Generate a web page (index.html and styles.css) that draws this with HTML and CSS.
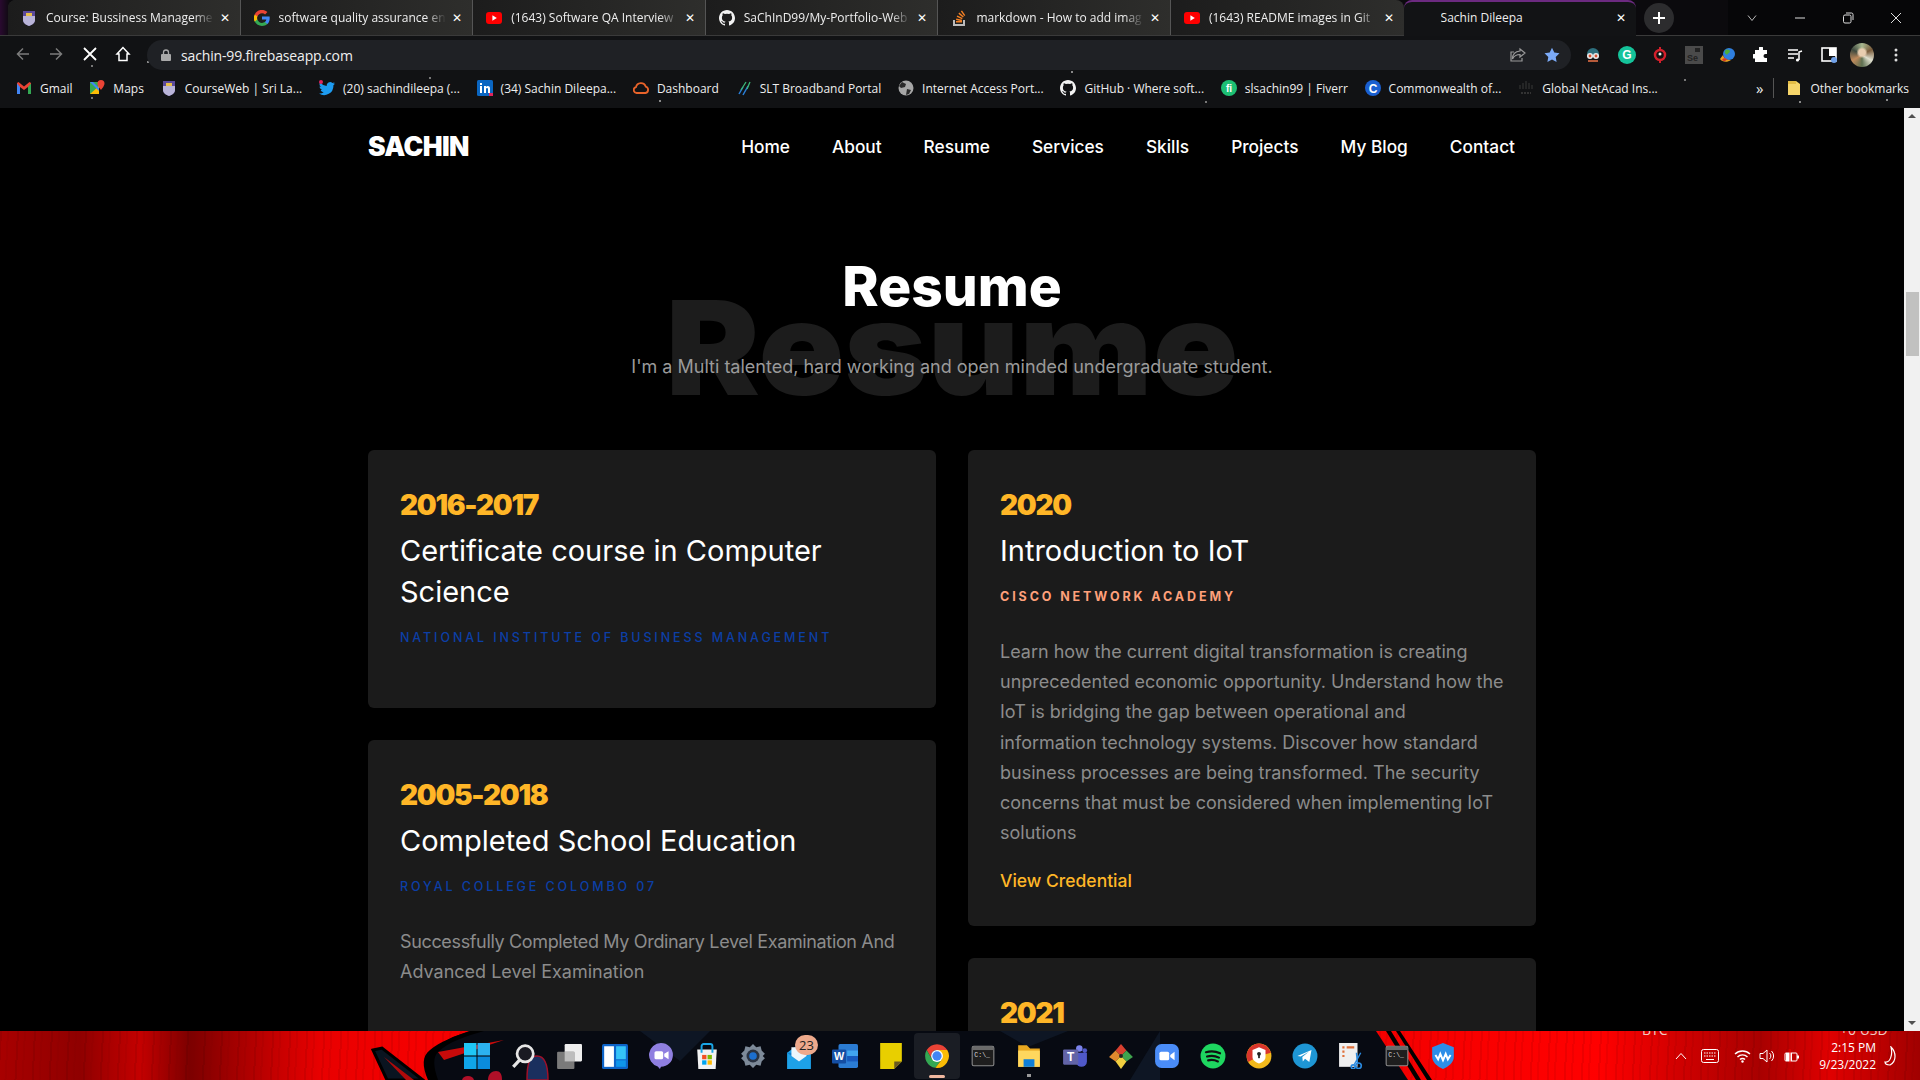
FILE: index.html
```html
<!DOCTYPE html>
<html lang="en">
<head>
  <meta charset="UTF-8" />
  <meta name="viewport" content="width=device-width, initial-scale=1.0" />
  <title>Sachin Dileepa</title>
  <link rel="stylesheet" href="styles.css">
</head>
<body>
  <svg class="sprite" xmlns="http://www.w3.org/2000/svg">
    <symbol id="i-shield" viewBox="0 0 16 16"><path d="M2 1h12v9c0 3-3 5-6 6-3-1-6-3-6-6z" fill="#5b4a9a"/><path d="M2 6h12v4c0 3-3 5-6 6-3-1-6-3-6-6z" fill="#b9b4d8"/><rect x="5" y="3" width="6" height="3" fill="#e7c04a"/></symbol>
    <symbol id="i-yt" viewBox="0 0 16 16"><rect y="2" width="16" height="12" rx="3" fill="#f00"/><path d="M6.4 5.2l4.4 2.8-4.4 2.8z" fill="#fff"/></symbol>
    <symbol id="i-gh" viewBox="0 0 16 16"><path fill="#f2f2f2" d="M8 0C3.6 0 0 3.6 0 8c0 3.5 2.3 6.5 5.5 7.6.4.1.5-.2.5-.4v-1.4c-2.2.5-2.7-1.1-2.7-1.1-.4-.9-.9-1.2-.9-1.2-.7-.5.1-.5.1-.5.8.1 1.2.8 1.2.8.7 1.2 1.9.9 2.3.7.1-.5.3-.9.5-1.1-1.8-.2-3.6-.9-3.6-4 0-.9.3-1.6.8-2.1-.1-.2-.4-1 .1-2.1 0 0 .7-.2 2.2.8a7.600 7.600 0 0 1 4 0c1.5-1 2.2-.8 2.2-.8.4 1.1.2 1.900.1 2.100.5.6.8 1.300.8 2.100 0 3.100-1.900 3.700-3.700 3.900.3.300.6.800.6 1.500v2.200c0 .2.100.5.600.4C13.700 14.500 16 11.500 16 8c0-4.400-3.600-8-8-8z"/></symbol>
    <symbol id="i-chrome" viewBox="0 0 24 24"><path d="M2.500 6.500A11 11 0 0 1 21.500 6.500H12A5.500 5.500 0 0 0 7.200 14.800z" fill="#ea4335"/><path d="M2.500 6.500A11 11 0 0 0 10.500 22.900L16.800 14.800H7.200z" fill="#34a853"/><path d="M21.500 6.500H12L16.800 14.800 10.500 22.900A11 11 0 0 0 21.500 6.500z" fill="#fbbc05"/><circle cx="12" cy="12" r="5.500" fill="#fff"/><circle cx="12" cy="12" r="4.300" fill="#4285f4"/></symbol>
    <symbol id="i-term" viewBox="0 0 24 24"><rect x="2" y="3" width="20" height="18" rx="1.500" fill="#1e1e1e" stroke="#8b8b8b"/><rect x="2.500" y="3.500" width="19" height="3" fill="#6a6a6a"/><text x="4" y="13" font-size="6" fill="#ddd" font-family="Liberation Mono, monospace">C:\_</text></symbol>
  </svg>

  <header class="browser">
    <div class="tabstrip">
      <div class="tab">
        <svg class="favicon"><use href="#i-shield"/></svg>
        <span class="tab-title">Course: Bussiness Manageme</span><span class="tab-x">✕</span>
      </div>
      <div class="tab">
        <svg class="favicon" viewBox="0 0 16 16"><path d="M15.700 8.200c0-.6 0-1.100-.1-1.600H8v3h4.400c-.2 1-.8 1.900-1.600 2.500v2h2.600c1.500-1.400 2.300-3.400 2.300-5.900z" fill="#4285f4"/><path d="M8 16c2.200 0 4-.7 5.400-1.900l-2.600-2c-.7.5-1.700.8-2.800.8-2.100 0-3.900-1.400-4.600-3.400H.7v2.100C2 14.200 4.800 16 8 16z" fill="#34a853"/><path d="M3.400 9.500c-.4-1-.4-2 0-3V4.400H.7a8 8 0 0 0 0 7.200z" fill="#fbbc05"/><path d="M8 3.200c1.200 0 2.300.4 3.100 1.200l2.300-2.300A8 8 0 0 0 .7 4.400l2.700 2.100C4.100 4.600 5.900 3.200 8 3.200z" fill="#ea4335"/></svg>
        <span class="tab-title">software quality assurance en</span><span class="tab-x">✕</span>
      </div>
      <div class="tab">
        <svg class="favicon"><use href="#i-yt"/></svg>
        <span class="tab-title">(1643) Software QA Interview</span><span class="tab-x">✕</span>
      </div>
      <div class="tab">
        <svg class="favicon"><use href="#i-gh"/></svg>
        <span class="tab-title">SaChInD99/My-Portfolio-Web</span><span class="tab-x">✕</span>
      </div>
      <div class="tab">
        <svg class="favicon" viewBox="0 0 16 16"><path d="M2 10h2v4h8v-4h2v6H2z" fill="#bcbbbb"/><path d="M5 11h6v1.500H5zM5.300 8.600l5.800 1.200-.3 1.400L5 10zM6.300 5.500l5.300 2.500-.6 1.300-5.300-2.500zM8.300 2.600l4.500 3.800-.9 1.100-4.500-3.800zM11 .5l3.300 4.800-1.200.8L9.800 1.300z" fill="#f48024"/></svg>
        <span class="tab-title">markdown - How to add imag</span><span class="tab-x">✕</span>
      </div>
      <div class="tab">
        <svg class="favicon"><use href="#i-yt"/></svg>
        <span class="tab-title">(1643) README images in Git</span><span class="tab-x">✕</span>
      </div>
      <div class="tab tab-active">
        <span class="tab-title tab-title-plain">Sachin Dileepa</span><span class="tab-x">✕</span>
      </div>
      <button class="newtab">
        <svg width="14" height="14" viewBox="0 0 14 14"><path d="M7 1v12M1 7h12" stroke="#fff" stroke-width="2"/></svg>
      </button>
      <div class="winctl">
        <svg width="12" height="12" viewBox="0 0 12 12"><path d="M2 3.500l4 5 4-5" fill="none" stroke="#bbb"/></svg>
        <svg width="12" height="12" viewBox="0 0 12 12"><path d="M1 6h10" stroke="#ddd"/></svg>
        <svg width="12" height="12" viewBox="0 0 12 12"><rect x="1.500" y="3" width="7.500" height="8" rx="1.500" fill="none" stroke="#ddd"/><path d="M4 1h5.500A1.500 1.500 0 0 1 11 2.500V8" fill="none" stroke="#ddd"/></svg>
        <svg width="12" height="12" viewBox="0 0 12 12"><path d="M1 1l10 10M11 1L1 11" stroke="#ddd"/></svg>
      </div>
    </div>

    <div class="toolbar">
      <div class="nav-btns">
        <svg width="16" height="16" viewBox="0 0 16 16"><path d="M14 8H2.500M8 2.500L2.500 8 8 13.500" fill="none" stroke="#7c7c7c" stroke-width="1.500"/></svg>
        <svg width="16" height="16" viewBox="0 0 16 16"><path d="M2 8h11.500M8 2.500L13.500 8 8 13.500" fill="none" stroke="#7c7c7c" stroke-width="1.500"/></svg>
        <svg width="16" height="16" viewBox="0 0 16 16"><path d="M2 2l12 12M14 2L2 14" stroke="#fff" stroke-width="1.800"/></svg>
        <svg width="16" height="16" viewBox="0 0 16 16"><path d="M8 1.500L2 8h2v6.500h8V8h2z" fill="none" stroke="#fff" stroke-width="1.500"/></svg>
      </div>
      <div class="omnibox">
        <svg width="10" height="12" viewBox="0 0 10 12"><rect y="5" width="10" height="7" rx="1" fill="#a9a9a9"/><path d="M2.500 5V3.500a2.500 2.500 0 0 1 5 0V5" fill="none" stroke="#a9a9a9" stroke-width="1.300"/></svg>
        <span class="url">sachin-99.firebaseapp.com</span>
        <svg class="omni-share" width="16" height="16" viewBox="0 0 16 16"><path d="M10 2l5 4-5 4V7.500C6 7.500 4 9 2.500 12c0-4 2-7.500 7.500-8zM12 11v3H1V5h3" fill="none" stroke="#9a9a9a" stroke-width="1.200"/></svg>
        <svg width="16" height="16" viewBox="0 0 16 16"><path d="M8 .8l2.300 4.800 5.200.7-3.800 3.600.9 5.200L8 12.600l-4.600 2.500.9-5.200L.5 6.300l5.200-.7z" fill="#7baaf7"/></svg>
      </div>
      <div class="extensions">
        <svg width="18" height="18" viewBox="0 0 18 18"><path d="M3 8a6 6 0 0 1 12 0v3H3z" fill="#2d6f7d"/><circle cx="6" cy="10" r="3" fill="#e8e8e8"/><circle cx="12" cy="10" r="3" fill="#e8e8e8"/><circle cx="6" cy="10" r="1.400" fill="#d8502f"/><circle cx="12" cy="10" r="1.400" fill="#d8502f"/><path d="M4 14h10v2H4z" fill="#b65a3a"/></svg>
        <svg width="18" height="18" viewBox="0 0 18 18"><circle cx="9" cy="9" r="9" fill="#15c39a"/><text x="9" y="13" font-size="12" font-weight="700" text-anchor="middle" fill="#fff" font-family="Liberation Sans, sans-serif">G</text></svg>
        <svg width="18" height="18" viewBox="0 0 18 18"><circle cx="9" cy="9" r="5" fill="#111" stroke="#d21f2b" stroke-width="2.500"/><circle cx="9" cy="8" r="1.500" fill="#eee"/><path d="M9 1v2M9 15v2" stroke="#d21f2b" stroke-width="2"/></svg>
        <svg width="18" height="18" viewBox="0 0 18 18"><rect width="18" height="18" fill="#4a4a4a"/><rect x="10" y="2" width="5" height="4" fill="#222"/><text x="2" y="15" font-size="9" font-weight="700" fill="#222" font-family="Liberation Sans, sans-serif">Se</text></svg>
        <svg width="18" height="18" viewBox="0 0 18 18"><circle cx="10" cy="8" r="6" fill="#2f7fe0"/><path d="M1 13c2 3 7 4 11 1-4 0-7-1-8-5z" fill="#e8a020"/><path d="M6 5c1-2 4-2 5 0 0 2-2 2-3 4-1-1-3-2-2-4z" fill="#4cae3e"/><path d="M3 14c1-2 3-2 5-1-1 2-3 3-5 1z" fill="#d8342a"/></svg>
        <svg width="16" height="16" viewBox="0 0 16 16"><path d="M6 1a2 2 0 0 1 4 0v2h4v4h-1.500a2 2 0 0 0 0 4H14v4H2v-3.500H.8a2.300 2.300 0 0 1 0-4.500H2V3h4z" fill="#fff"/></svg>
        <svg width="16" height="16" viewBox="0 0 16 16"><path d="M1 3h10M1 7h10M1 11h6" stroke="#fff" stroke-width="1.500"/><path d="M12 13V5l3-1" fill="none" stroke="#fff" stroke-width="1.500"/><circle cx="10.500" cy="13" r="1.600" fill="#fff"/></svg>
        <svg width="16" height="16" viewBox="0 0 16 16"><rect x="1" y="1" width="14" height="13" fill="none" stroke="#fff" stroke-width="1.600"/><rect x="8" y="1" width="7" height="8" fill="#fff"/><circle cx="13" cy="13" r="3" fill="#6fa0e8"/></svg>
        <span class="avatar"></span>
        <svg width="4" height="16" viewBox="0 0 4 16"><circle cx="2" cy="3" r="1.500" fill="#ddd"/><circle cx="2" cy="8" r="1.500" fill="#ddd"/><circle cx="2" cy="13" r="1.500" fill="#ddd"/></svg>
      </div>
    </div>

    <nav class="bookmarks">
      <a class="bm"><svg class="favicon" viewBox="0 0 16 16"><path d="M1 3v11h3V7l4 3 4-3v7h3V3l-1.500-1L8 6.500 2.500 2z" fill="#ea4335"/><path d="M1 3.500V14h3V7z" fill="#4285f4"/><path d="M12 7v7h3V3.500z" fill="#34a853"/></svg>Gmail</a>
      <a class="bm"><svg class="favicon" viewBox="0 0 16 16"><path d="M1 2h9v12H1z" fill="#34a853"/><path d="M1 14L10 6v8z" fill="#fbbc05"/><path d="M1 2l9 9V8L4 2z" fill="#4285f4"/><path d="M12 0a3.500 3.500 0 0 0-3.500 3.500C8.500 6 12 10 12 10s3.500-4 3.500-6.500A3.500 3.500 0 0 0 12 0z" fill="#ea4335"/></svg>Maps</a>
      <a class="bm"><svg class="favicon"><use href="#i-shield"/></svg>CourseWeb | Sri La...</a>
      <a class="bm"><svg class="favicon" viewBox="0 0 16 16"><path d="M16 3.500c-.6.300-1.200.5-1.900.5.700-.4 1.200-1 1.400-1.800-.6.400-1.300.7-2.100.8a3.300 3.300 0 0 0-5.600 3A9.300 9.300 0 0 1 1.100 2.600a3.300 3.300 0 0 0 1 4.400c-.5 0-1-.2-1.500-.4 0 1.600 1.100 2.900 2.600 3.200-.5.100-1 .2-1.500.1.400 1.300 1.600 2.200 3 2.300A6.600 6.600 0 0 1 0 13.500 9.300 9.300 0 0 0 14.400 5.200c.6-.4 1.200-1 1.600-1.700z" fill="#1d9bf0"/><circle cx="2" cy="2" r="2" fill="#e0245e"/></svg>(20) sachindileepa (...</a>
      <a class="bm"><svg class="favicon" viewBox="0 0 16 16"><rect width="16" height="16" rx="1.500" fill="#0a66c2"/><path d="M3 6h2v7H3zM3 3h2v2H3zM7 6h2v1c1-1.500 4-1.500 4 1.500V13h-2V9c0-1.500-2-1.500-2 0v4H7z" fill="#fff"/><rect x="12" y="13" width="4" height="3" fill="#e0245e"/></svg>(34) Sachin Dileepa...</a>
      <a class="bm"><svg class="favicon" viewBox="0 0 16 16"><path d="M3.500 13A3 3 0 0 1 3 7.100a5 5 0 0 1 9.700-.5A3.300 3.300 0 0 1 12.500 13z" fill="none" stroke="#e8632a" stroke-width="1.800"/></svg>Dashboard</a>
      <a class="bm"><svg class="favicon" viewBox="0 0 16 16"><path d="M3 14l4-7M7 15l5-9" stroke="#2a7fd8" stroke-width="1.500"/><path d="M5 10l5-8M11 9l3-7" stroke="#3cb878" stroke-width="1.300"/></svg>SLT Broadband Portal</a>
      <a class="bm"><svg class="favicon" viewBox="0 0 16 16"><circle cx="8" cy="8" r="7.500" fill="#a6a6a6"/><path d="M4 2l4 2-1 3-4 1-2-2zM9 9l4 1-2 4-3 1z" fill="#2a2a2a"/></svg>Internet Access Port...</a>
      <a class="bm"><svg class="favicon"><use href="#i-gh"/></svg>GitHub · Where soft...</a>
      <a class="bm"><svg class="favicon" viewBox="0 0 16 16"><circle cx="8" cy="8" r="8" fill="#1dbf73"/><text x="8" y="12" font-size="10" font-weight="700" text-anchor="middle" fill="#fff" font-family="Liberation Sans, sans-serif">fi</text></svg>slsachin99 | Fiverr</a>
      <a class="bm"><svg class="favicon" viewBox="0 0 16 16"><circle cx="8" cy="8" r="8" fill="#1a5fd0"/><text x="8" y="12.500" font-size="12" font-weight="700" text-anchor="middle" fill="#fff" font-family="Liberation Sans, sans-serif">C</text></svg>Commonwealth of...</a>
      <a class="bm"><svg class="favicon" viewBox="0 0 16 16"><path d="M2 5v4M5 3v6M8 1v8M11 3v6M14 5v4" stroke="#333" stroke-width="1.200"/><path d="M3 13h10" stroke="#333" stroke-width="2" stroke-dasharray="2 1"/></svg>Global NetAcad Ins...</a>
      <span class="bm-more">»</span>
      <span class="bm-sep"></span>
      <a class="bm bm-other"><svg class="favicon" viewBox="0 0 16 16"><path d="M2 1h8l4 3v11H2z" fill="#f6d56a"/><path d="M2 1h8v3H2z" fill="#e3bc45"/></svg>Other bookmarks</a>
    </nav>
  </header>

  <div class="viewport">
    <main class="page">
      <div class="topnav">
        <a class="logo">SACHIN</a>
        <ul class="menu">
          <li>Home</li>
          <li>About</li>
          <li>Resume</li>
          <li>Services</li>
          <li>Skills</li>
          <li>Projects</li>
          <li>My Blog</li>
          <li>Contact</li>
        </ul>
      </div>

      <section class="resume">
        <div class="heading">
          <span class="ghost">Resume</span>
          <h1>Resume</h1>
          <p>I'm a Multi talented, hard working and open minded undergraduate student.</p>
        </div>

        <div class="columns">
          <div class="col">
            <article class="card card-first">
              <h3>2016-2017</h3>
              <h4>Certificate course in Computer Science</h4>
              <h5 class="blue">National Institute Of Business Management</h5>
            </article>
            <article class="card card-long">
              <h3>2005-2018</h3>
              <h4>Completed School Education</h4>
              <h5 class="blue">Royal College Colombo 07</h5>
              <p><span class="fit">Successfully Completed My Ordinary Level Examination And</span> Advanced Level Examination</p>
            </article>
          </div>
          <div class="col">
            <article class="card">
              <h3>2020</h3>
              <h4>Introduction to IoT</h4>
              <h5 class="orange">Cisco Network Academy</h5>
              <p>Learn how the current digital transformation is creating unprecedented economic opportunity. Understand how the IoT is bridging the gap between operational and information technology systems. Discover how standard business processes are being transformed. The security concerns that must be considered when implementing IoT solutions</p>
              <a class="credential">View Credential</a>
            </article>
            <article class="card">
              <h3>2021</h3>
            </article>
          </div>
        </div>
      </section>
    </main>
    <div class="scrollbar">
      <span class="arrow arrow-up"></span>
      <span class="thumb"></span>
      <span class="arrow arrow-down"></span>
    </div>
  </div>

  <footer class="taskbar">
    <svg class="wallpaper" viewBox="0 0 1920 49" preserveAspectRatio="none">
      <path d="M470 0H1376L1408 49H436L430 24C440 10 455 5 470 0z" fill="#070a12"/>
      <path d="M373 19l9-2 41 32h-36z" fill="#0a1420" stroke="#000" stroke-width="3"/>
      <path d="M384 26l30 23h-8z" fill="#b00a0a"/>
      <path d="M428 49c-6-14-6-24 2-30 10-8 24-14 40-19h14c-18 5-36 11-46 21-5 5-5 14 0 28z" fill="#000"/>
      <path d="M438 21l66-12-60 20z" fill="#c80a0a"/>
      <path d="M1386 0h5l30 49h-5zM1396 0h4l32 49h-5z" fill="#000"/>
      <path d="M1000 0l28 16 40-16zM640 0l40 30 30-30zM1160 0l-30 49h30z" fill="#0e1624"/>
      <path d="M527 49c0-18 3-24 10-24s11 6 11 24z" fill="#1a2f5e" stroke="#a01028" stroke-width="1.500"/>
      <path d="M488 49c0-6 4-9 8-9s6 3 6 9zM462 49c1-3 3-4 6-4s5 1 6 4z" fill="#b01028"/>
    </svg>
    <span class="widget widget-l">BTC</span>
    <span class="widget widget-r">+0 USD</span>

    <div class="apps">
      <span class="app"><svg viewBox="0 0 24 24"><path d="M0 0h11.500v11.500H0z" fill="#1fc6f5"/><path d="M12.500 0H24v11.500H12.500z" fill="#2cb2f0"/><path d="M0 12.500h11.500V24H0z" fill="#0fa5e9"/><path d="M12.500 12.500H24V24H12.500z" fill="#0a8bdc"/></svg></span>
      <span class="app"><svg viewBox="0 0 24 24"><circle cx="14" cy="10" r="7.500" fill="#1a1a22" stroke="#e6e6e6" stroke-width="2.500"/><path d="M9 15.500L3 22" stroke="#e6e6e6" stroke-width="3"/></svg></span>
      <span class="app"><svg viewBox="0 0 24 24"><rect x="8" y="1" width="16" height="16" rx="1" fill="#eee"/><rect x="1" y="8" width="16" height="16" rx="1" fill="#7a7a7a"/><rect x="8" y="8" width="9" height="9" fill="#bdbdbd"/></svg></span>
      <span class="app"><svg viewBox="0 0 24 24"><rect x="0" y="1" width="24" height="23" rx="1.500" fill="#0d64c8"/><rect x="2" y="3" width="9" height="19" fill="#fff"/><rect x="13" y="3" width="9" height="12" fill="#35c3f8"/><rect x="13" y="16" width="9" height="6" fill="#0f96ea"/></svg></span>
      <span class="app"><svg viewBox="0 0 24 24"><path d="M12 0a11 11 0 0 1 0 22l-1 2-2-2.400A11 11 0 0 1 12 0z" fill="#8f7fe0"/><rect x="6" y="7.500" width="8" height="7.500" rx="1.500" fill="#fff"/><path d="M15 10l4-2.500v7.500l-4-2.500z" fill="#fff"/></svg></span>
      <span class="app"><svg viewBox="0 0 24 24"><path d="M3 6h18l-1 18H4z" fill="#f2f2f2"/><path d="M7 9V3a2 2 0 0 1 2-2h6a2 2 0 0 1 2 2v6" fill="none" stroke="#19a5e6" stroke-width="1.800"/><rect x="7.500" y="11" width="4" height="4" fill="#f25022"/><rect x="12.500" y="11" width="4" height="4" fill="#7fba00"/><rect x="7.500" y="16" width="4" height="4" fill="#00a4ef"/><rect x="12.500" y="16" width="4" height="4" fill="#ffb900"/></svg></span>
      <span class="app"><svg viewBox="0 0 24 24"><path d="M12 1l3 3 4-1 1 4 3 3-2 2 2 2-3 3-1 4-4-1-3 3-3-3-4 1-1-4-3-3 2-2-2-2 3-3 1-4 4 1z" fill="#7d8a99"/><circle cx="12" cy="12" r="6" fill="#2a3342"/><circle cx="12" cy="12" r="3.500" fill="#1c6fd0"/></svg></span>
      <span class="app app-mail"><svg viewBox="0 0 24 24"><path d="M1 9l11-8 11 8v15H1z" fill="#1da1e8"/><path d="M1 9l11 8 11-8" fill="#0f7ccd"/><path d="M5 4h14v8l-7 5-7-5z" fill="#eaf6fd"/></svg><b class="badge">23</b></span>
      <span class="app"><svg viewBox="0 0 24 24"><rect x="6" y="1" width="18" height="22" rx="1.500" fill="#2b7cd3"/><rect x="14" y="7" width="10" height="5" fill="#41a5ee"/><rect x="14" y="12" width="10" height="5" fill="#185abd"/><rect x="0" y="6" width="13" height="13" rx="1" fill="#144ea3"/><text x="6.500" y="16" font-size="10" font-weight="700" text-anchor="middle" fill="#fff" font-family="Liberation Sans, sans-serif">W</text></svg></span>
      <span class="app"><svg viewBox="0 0 24 24"><path d="M2 0h20v17l-7 7H2z" fill="#e8cf00"/><path d="M15 24v-7h7z" fill="#6a5a20"/></svg></span>
      <span class="app app-active"><svg viewBox="0 0 24 24"><use href="#i-chrome"/></svg></span>
      <span class="app"><svg viewBox="0 0 24 24"><use href="#i-term"/></svg></span>
      <span class="app app-open"><svg viewBox="0 0 24 24"><path d="M2 2h8l3 3h9v17H2z" fill="#e9a820"/><path d="M2 7h20v15H2z" fill="#ffd75e"/><rect x="7" y="15" width="10" height="7" fill="#0f7fd8"/></svg></span>
      <span class="app"><svg viewBox="0 0 24 24"><circle cx="16" cy="5" r="3" fill="#7b83eb"/><circle cx="21" cy="7" r="2.200" fill="#5059c9"/><path d="M13 9h10v8a5 5 0 0 1-10 0z" fill="#5059c9"/><rect x="1" y="6" width="14" height="14" rx="1" fill="#6264a7"/><text x="8" y="17" font-size="11" font-weight="700" text-anchor="middle" fill="#fff" font-family="Liberation Sans, sans-serif">T</text></svg></span>
      <span class="app"><svg viewBox="0 0 24 24"><path d="M12 1l5 6-5 5-5-5z" fill="#d8402f"/><path d="M17 7l6 6-6 4-5-5z" fill="#3fa34d"/><path d="M7 7l5 5-5 5-6-4z" fill="#e08a2e"/><path d="M7 17l5-5 5 5-5 7z" fill="#f2d040"/><circle cx="12" cy="12" r="1.800" fill="#222"/></svg></span>
      <span class="app"><svg viewBox="0 0 24 24"><rect x="1" y="1" width="22" height="22" rx="6" fill="#4a8cf7"/><rect x="5" y="8" width="9" height="8" rx="1.500" fill="#fff"/><path d="M15 11l4-3v8l-4-3z" fill="#fff"/></svg></span>
      <span class="app"><svg viewBox="0 0 24 24"><circle cx="12" cy="12" r="11.500" fill="#1ed760"/><path d="M5.500 8.500c4.500-1.300 9-1 13 1M6.500 12.500c3.500-1 7.500-.8 11 1M7.500 16c3-.7 6-.5 9 1" fill="none" stroke="#111" stroke-width="2" stroke-linecap="round"/></svg></span>
      <span class="app"><svg viewBox="0 0 24 24"><circle cx="12" cy="12" r="11.500" fill="#f2b91c"/><path d="M12 .5a11.500 11.500 0 0 0-10 17l10-5.500z" fill="#d9342b"/><path d="M12 .5A11.500 11.500 0 0 1 23 9l-11 3z" fill="#d9342b"/><path d="M12 4l6 2.500V13c0 3-3 5-6 6-3-1-6-3-6-6V6.500z" fill="#fff"/><circle cx="12" cy="10" r="1.800" fill="#222"/><rect x="11.200" y="10" width="1.600" height="4" fill="#222"/></svg></span>
      <span class="app"><svg viewBox="0 0 24 24"><circle cx="12" cy="12" r="11.500" fill="#1e96d4"/><path d="M5 12l13-5.500-2 11-4-3-2 2.500-.5-4 6-5-7.500 4.500z" fill="#fff"/></svg></span>
      <span class="app"><svg viewBox="0 0 24 24"><rect x="1" y="0" width="17" height="22" fill="#efefef"/><path d="M4 3h2v2H4zM4 7h2v2H4zM4 11h2v2H4zM8 3h7v2H8z" fill="#e0703a"/><circle cx="19" cy="21" r="2.500" fill="none" stroke="#2a8ae0" stroke-width="1.500"/><circle cx="14" cy="22" r="1.800" fill="none" stroke="#2a8ae0" stroke-width="1.500"/><path d="M15 20l6-11M18 19l-1-10" stroke="#2a8ae0" stroke-width="1.300"/></svg></span>
      <span class="app"><svg viewBox="0 0 24 24"><use href="#i-term"/></svg></span>
      <span class="app"><svg viewBox="0 0 24 24"><path d="M12 0l10 4v9c0 5-5 9-10 11C7 22 2 18 2 13V4z" fill="#2d8ee8"/><path d="M5 11l2.500 4 2-5 2.500 6 2.500-6 2 5 2.500-4" fill="none" stroke="#fff" stroke-width="1.800"/></svg></span>
    </div>

    <div class="tray">
      <svg class="tray-chevron" width="12" height="8" viewBox="0 0 12 8"><path d="M1 7l5-5.500L11 7" fill="none" stroke="#fff"/></svg>
      <svg class="tray-keys" width="18" height="14" viewBox="0 0 18 14"><rect x=".5" y=".5" width="17" height="13" rx="2" fill="none" stroke="#fff"/><path d="M3 4h12M3 7h12" stroke="#fff" stroke-dasharray="1.500 1"/><path d="M5 10.500h8" stroke="#fff"/></svg>
      <svg width="17" height="14" viewBox="0 0 17 14"><path d="M1 5a11 11 0 0 1 15 0M3.500 8a7 7 0 0 1 10 0M6 10.500a3.500 3.500 0 0 1 5 0" fill="none" stroke="#fff" stroke-width="1.400"/><circle cx="8.500" cy="12.500" r="1.200" fill="#fff"/></svg>
      <svg width="17" height="16" viewBox="0 0 17 16"><path d="M1 5.500h3L8 2v12L4 10.500H1z" fill="none" stroke="#fff"/><path d="M10.500 5a4 4 0 0 1 0 6M12.500 3a7 7 0 0 1 0 10" fill="none" stroke="#fff"/></svg>
      <svg width="17" height="16" viewBox="0 0 17 16"><rect x="1" y="5" width="12" height="8" rx="1" fill="none" stroke="#fff"/><path d="M2 5h6v8H2z" fill="#fff"/><path d="M6 1v14" stroke="#e00" stroke-width="1"/><rect x="13" y="7.500" width="2" height="3" fill="#fff"/></svg>
      <div class="clock"><span>2:15 PM</span><span>9/23/2022</span></div>
      <svg width="14" height="20" viewBox="0 0 14 20"><path d="M7 1c5 5 6 14-1 18-3 0-5-1-5-3 5 1 8-7 6-15z" fill="none" stroke="#fff" stroke-width="1.200"/></svg>
    </div>
  </footer>
</body>
</html>
```

FILE: styles.css
```css
* {
  box-sizing: border-box;
}
html, body {
  height: 100%;
}
body {
  margin: 0;
  height: 1080px;
  overflow: hidden;
  display: flex;
  flex-direction: column;
  background: #000;
  font-family: Inter, "Noto Sans", sans-serif;
}
.sprite {
  display: none;
}

/* browser frame */
.browser {
  height: 108px;
  flex: none;
  color: #eee;
  font-family: "Open Sans", sans-serif;
  font-size: 12px;
  background-color: #111214;
  background-image:
    radial-gradient(circle at 148px 62px, #8a8a8a 0 1px, transparent 1.500px),
    radial-gradient(circle at 92px 66px, #777 0 1px, transparent 1.500px),
    radial-gradient(circle at 92px 98px, #777 0 1px, transparent 1.500px),
    radial-gradient(circle at 430px 78px, #777 0 1px, transparent 1.500px),
    radial-gradient(circle at 660px 101px, #888 0 1px, transparent 1.500px),
    radial-gradient(circle at 796px 3px, #aaa 0 1px, transparent 1.500px),
    radial-gradient(circle at 1072px 72px, #888 0 1px, transparent 1.500px),
    radial-gradient(circle at 1206px 102px, #777 0 1px, transparent 1.500px),
    radial-gradient(circle at 1435px 28px, #888 0 1px, transparent 1.500px),
    radial-gradient(circle at 1685px 80px, #777 0 1px, transparent 1.500px),
    radial-gradient(circle at 1800px 102px, #888 0 1px, transparent 1.500px),
    radial-gradient(circle at 1887px 100px, #888 0 1px, transparent 1.500px);
}
.tabstrip {
  height: 36px;
  display: flex;
  align-items: center;
  padding-left: 8px;
  background: #0b0a0d linear-gradient(90deg, #2a0a30 0, #0b0a0d 10px);
  border-bottom: 1px solid #3a3a3a;
}
.tab {
  width: 232.600px;
  height: 35px;
  display: flex;
  align-items: center;
  padding: 0 8px 0 13px;
  background: #242424 linear-gradient(90deg, #1c1c1c, #2e2e2c);
  border-right: 1px solid #555;
}
.tab:first-child {
  border-radius: 8px 0 0 0;
}
.tab:nth-child(6) {
  border-right: 0;
  border-radius: 0 8px 0 0;
}
.tab-active {
  height: 36px;
  margin-bottom: -1px;
  padding-bottom: 3px;
  background: #121315;
  border-top: 2px solid #6c2a80;
  border-right: 0;
  border-radius: 8px 8px 0 0;
}
.favicon {
  width: 16px;
  height: 16px;
  flex: none;
}
.tab-title {
  flex: 1;
  margin-left: 9px;
  white-space: nowrap;
  overflow: hidden;
  -webkit-mask-image: linear-gradient(90deg, #000 88%, transparent);
  mask-image: linear-gradient(90deg, #000 88%, transparent);
}
.tab-title-plain {
  margin-left: 24px;
  -webkit-mask-image: none;
  mask-image: none;
}
.tab-x {
  width: 14px;
  flex: none;
  margin-left: 4px;
  font-size: 12px;
  text-align: center;
  color: #fff;
}
.newtab {
  width: 30px;
  height: 30px;
  margin-left: 8px;
  padding: 0;
  border: 0;
  border-radius: 50%;
  background: #2c2c2e;
  display: flex;
  align-items: center;
  justify-content: center;
}
.winctl {
  margin-left: auto;
  width: 192px;
  display: flex;
  justify-content: space-between;
  padding: 0 18px;
  align-self: stretch;
  align-items: center;
  background: #060608;
}

.toolbar {
  height: 36px;
  display: flex;
  align-items: center;
}
.nav-btns {
  width: 147px;
  display: flex;
  justify-content: space-between;
  padding: 0 16px 0 15px;
}
.omnibox {
  width: 1424px;
  height: 30px;
  margin-top: 2px;
  padding: 0 11px 0 14px;
  display: flex;
  align-items: center;
  border-radius: 15px;
  background: #1f2125;
}
.url {
  margin-left: 10px;
  font-size: 14px;
  color: #f0f0f0;
  letter-spacing: -0.150px;
}
.omni-share {
  margin-left: auto;
  margin-right: 18px;
}
.extensions {
  flex: 1;
  display: grid;
  grid-template-columns: repeat(10, 33.700px);
  justify-items: center;
  align-items: center;
  padding: 2px 0 0 5px;
}
.avatar {
  width: 24px;
  height: 24px;
  border-radius: 50%;
  background:
    radial-gradient(circle at 50% 40%, #e8cdb0 0 18%, transparent 30%),
    conic-gradient(#a8b890, #7a5c3c, #e0e0d0, #5d6f50, #c08a5c, #3f4a3f, #a8b890);
}

.bookmarks {
  height: 36px;
  display: flex;
  align-items: center;
  padding: 0 11px 4px 16px;
}
.bm {
  display: flex;
  align-items: center;
  gap: 8px;
  margin-right: 16.800px;
  white-space: nowrap;
  color: #eee;
}
.bm-more {
  margin-left: auto;
  font-size: 15px;
  line-height: 1;
  margin-right: 10px;
}
.bm-sep {
  width: 1px;
  height: 20px;
  background: #555;
  margin-right: 12px;
}
.bm-other {
  margin-right: 0;
}

/* page */
.viewport {
  flex: 1;
  min-height: 0;
  display: flex;
  overflow: hidden;
}
.page {
  flex: 1;
  min-width: 0;
  padding: 0 368px;
  color: #fff;
}
.topnav {
  height: 76px;
  display: flex;
  align-items: center;
  justify-content: space-between;
  padding-right: 21px;
}
.logo {
  font-size: 26.500px;
  font-weight: 900;
  letter-spacing: -0.600px;
}
.menu {
  display: flex;
  gap: 42px;
  margin: 0;
  padding: 0;
  list-style: none;
  font-size: 17.300px;
  font-weight: 500;
}
.heading {
  position: relative;
  text-align: center;
  padding-top: 64px;
  height: 266px;
}
.heading h1 {
  position: relative;
  margin: 0;
  font-size: 55px;
  line-height: 76px;
  font-weight: 800;
}
.heading p {
  position: relative;
  margin: 28px 0 0;
  font-size: 18px;
  line-height: 30px;
  color: #9a9a9a;
}
.ghost {
  position: absolute;
  left: 0;
  right: 0;
  top: 89px;
  font-size: 131px;
  line-height: 150px;
  font-weight: 900;
  color: #1c1c1c;
  transform: scaleX(1.080);
}
.columns {
  display: flex;
  gap: 32px;
}
.col {
  flex: 1;
  min-width: 0;
  display: flex;
  flex-direction: column;
  gap: 32px;
}
.card {
  padding: 32px 32px 30px;
  border-radius: 6px;
  background: #1b1b1b;
}
.card-first {
  height: 258px;
}
.card-long {
  min-height: 340px;
}
.card h3 {
  margin: 0 0 2px;
  font-size: 28px;
  line-height: 46px;
  font-weight: 900;
  color: #ffb627;
  letter-spacing: -1.300px;
}
.card h4 {
  margin: 0;
  font-size: 29px;
  line-height: 41px;
  font-weight: 400;
  color: #fff;
}
.card h5 {
  margin: 16px 0 0;
  font-size: 12.500px;
  line-height: 20px;
  font-weight: 500;
  letter-spacing: 2.900px;
  text-transform: uppercase;
}
.blue {
  color: #0c3fa6;
}
.card h5.orange {
  color: #ffa07a;
  font-weight: 700;
}
.card p {
  margin: 30px 0 0;
  font-size: 18px;
  line-height: 30.200px;
  color: #8c8c8c;
}
.fit {
  letter-spacing: -0.350px;
}
.credential {
  display: block;
  margin-top: 18px;
  font-size: 17.500px;
  line-height: 30px;
  font-weight: 500;
  color: #ffb627;
}

.scrollbar {
  width: 16px;
  flex: none;
  display: flex;
  flex-direction: column;
  background: #f1f1f1;
  position: relative;
}
.arrow {
  position: absolute;
  left: 4px;
  border-left: 4px solid transparent;
  border-right: 4px solid transparent;
}
.arrow-up {
  top: 6px;
  border-bottom: 4px solid #505050;
}
.arrow-down {
  bottom: 6px;
  border-top: 4px solid #505050;
}
.thumb {
  position: absolute;
  left: 2px;
  right: 1px;
  top: 184px;
  height: 64px;
  background: #c1c1c0;
}

/* taskbar */
.taskbar {
  position: relative;
  height: 49px;
  flex: none;
  overflow: hidden;
  display: flex;
  align-items: center;
  background:
    repeating-linear-gradient(93deg, rgba(0,0,0,0.07) 0 2px, transparent 2px 7px, rgba(120,0,0,0.1) 7px 9px, transparent 9px 17px),
    linear-gradient(90deg, #a80000 0, #8f0000 80px, #c40000 140px, #7c0000 190px, #b00000 250px, #e80000 320px, #f50000 420px, #f50000 1400px, #ff0000 1600px, #d00000 1680px, #a80000 1760px, #e00000 1830px, #a00000 1920px);
}
.wallpaper {
  position: absolute;
  inset: 0;
  width: 100%;
  height: 100%;
}
.widget {
  position: absolute;
  top: -9px;
  font-family: "Open Sans", sans-serif;
  font-size: 14px;
  line-height: 16px;
  color: #f0c8c0;
}
.widget-l {
  left: 1642px;
}
.widget-r {
  left: 1840px;
}
.apps {
  position: relative;
  display: flex;
  margin-left: 454px;
}
.app {
  position: relative;
  width: 46px;
  height: 46px;
  display: flex;
  align-items: center;
  justify-content: center;
}
.app svg {
  width: 26px;
  height: 26px;
}
.app-active {
  background: #1a1d24;
  border-radius: 4px;
}
.app-active::after {
  content: "";
  position: absolute;
  left: 15px;
  right: 15px;
  bottom: 1px;
  height: 3px;
  border-radius: 2px;
  background: #f0b8a0;
}
.app-open::after {
  content: "";
  position: absolute;
  left: 21px;
  bottom: 2px;
  width: 4px;
  height: 3px;
  background: #999;
}
.badge {
  position: absolute;
  top: 2px;
  right: 4px;
  width: 23px;
  height: 20px;
  border-radius: 10px;
  text-align: center;
  font: 400 13px/20px "Open Sans", sans-serif;
  color: #222;
  background: #eda98c;
}
.tray {
  position: absolute;
  right: 22px;
  top: 0;
  height: 49px;
  display: flex;
  align-items: center;
  gap: 8px;
}
.tray-chevron {
  margin-right: 6px;
}
.tray-keys {
  margin-right: 7.500px;
}
.clock {
  display: flex;
  flex-direction: column;
  align-items: flex-end;
  margin-left: 10px;
  font-family: "Open Sans", sans-serif;
  font-size: 12px;
  line-height: 17px;
  color: #fff;
}
```
